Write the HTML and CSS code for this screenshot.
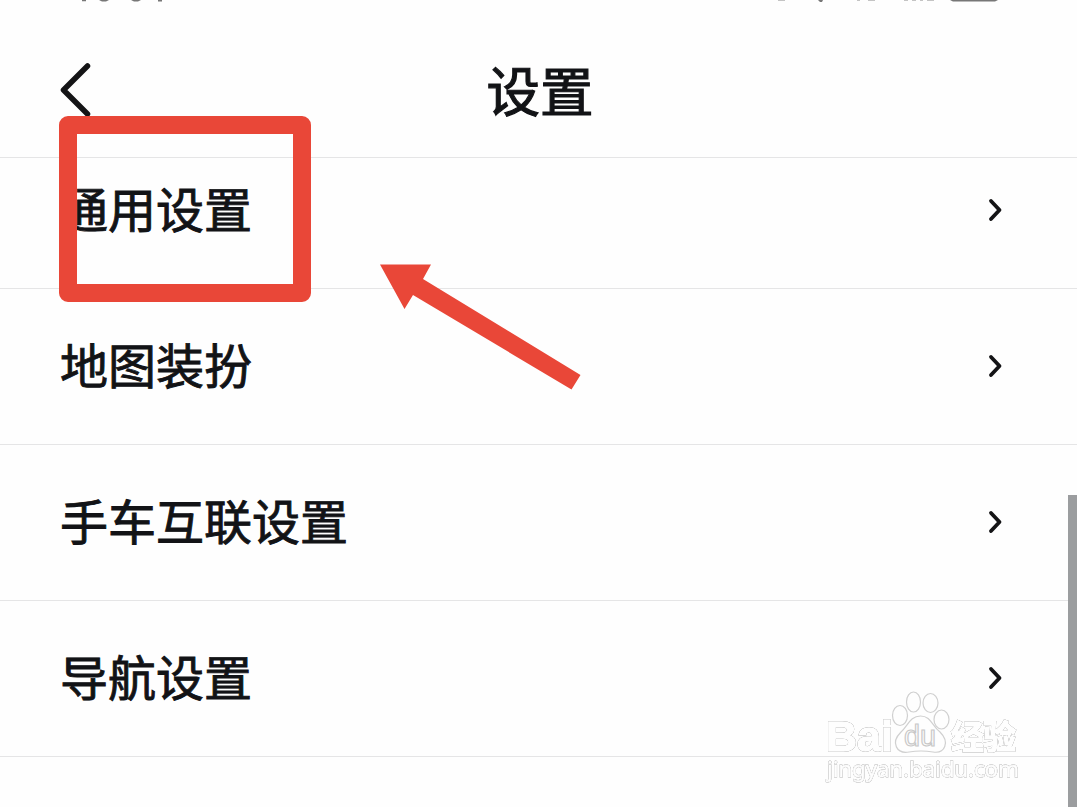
FILE: index.html
```html
<!DOCTYPE html>
<html lang="zh-CN">
<head>
<meta charset="utf-8">
<title>设置</title>
<link rel="stylesheet" href="styles.css">
</head>
<body>
<main class="screen">
  <header class="header">
    <svg class="back" viewBox="0 0 36 60" aria-label="返回"><path d="M29.500 9 5.500 33 29.500 57"/></svg>
    <h1 class="title">设置</h1>
    <span class="header-end"></span>
  </header>
  <ul class="list">
    <li class="row row-first"><span class="label">通用设置</span><svg class="chevron" viewBox="0 0 18 28"><path d="M5 4 13.500 13 5 22"/></svg></li>
    <li class="row"><span class="label">地图装扮</span><svg class="chevron" viewBox="0 0 18 28"><path d="M5 4 13.500 13 5 22"/></svg></li>
    <li class="row"><span class="label">手车互联设置</span><svg class="chevron" viewBox="0 0 18 28"><path d="M5 4 13.500 13 5 22"/></svg></li>
    <li class="row"><span class="label">导航设置</span><svg class="chevron" viewBox="0 0 18 28"><path d="M5 4 13.500 13 5 22"/></svg></li>
  </ul>
  <svg class="status" viewBox="0 0 1077 6">
    <path d="M82 0h4v1.200h-4zM99 0h10l-3 1.500h-4zM131 0h10l-3 1.500h-4zM158 0h4v1.500h-4z"/>
    <path d="M818 0h5l-1 2h-2zM950 0h48l-3 1.500h-42z"/>
    <path class="status-faint" d="M778 0h7v1h-7zM857 0h3v1h-3zM868 0h7v1h-7zM904 0h4v1h-4zM912 0h4v1h-4zM920 0h3v1h-3zM927 0h7v1h-7z"/>
  </svg>
  <svg class="watermark" viewBox="0 0 210 100">
    <text class="wm-logo" x="6" y="66" textLength="67" lengthAdjust="spacingAndGlyphs">Bai</text>
    <g class="wm-paw">
      <ellipse cx="80" cy="30.500" rx="7.500" ry="10"/>
      <ellipse cx="93.500" cy="17" rx="7" ry="10"/>
      <ellipse cx="110.500" cy="18" rx="7.500" ry="9.500"/>
      <ellipse cx="121.500" cy="34.500" rx="7.500" ry="9.500"/>
      <path d="M100.500 31C90 31 88 41 81 47C70 58 77 69 89 67Q101 65 113 67C125 69 130 57 120 47C112 41 111 31 100.500 31Z"/>
    </g>
    <text class="wm-du" x="84" y="61" textLength="32" lengthAdjust="spacingAndGlyphs">du</text>
    <text class="wm-cn" x="131" y="64" textLength="65">经验</text>
    <text class="wm-url" x="7" y="92" textLength="192">jingyan.baidu.com</text>
  </svg>
  <div class="scrollbar"></div>
  <div class="highlight"></div>
  <svg class="arrow" viewBox="0 0 210 130"><path d="M5 4.500H56L48 19 205.500 115 196.500 129.500 38 35 29.500 49Z"/></svg>
</main>
</body>
</html>
```
FILE: styles.css
```css
* { box-sizing: border-box; }
body { margin: 0; background: #fefefe; }
.screen {
  position: relative;
  width: 1077px;
  height: 807px;
  overflow: hidden;
  color: #121316;
  font-family: "Noto Sans CJK SC", sans-serif;
}
.header {
  display: flex;
  align-items: center;
  justify-content: space-between;
  height: 158px;
  padding: 20px 55px 0 58px;
  border-bottom: 1px solid #e5e5e6;
}
.back { width: 36px; height: 60px; margin-top: -3px; }
.back path, .chevron path { fill: none; stroke: #141416; stroke-linecap: round; stroke-linejoin: round; }
.back path { stroke-width: 5.5; }
.title {
  margin: 0;
  font-size: 53.5px;
  font-weight: 400;
  line-height: 70px;
  -webkit-text-stroke: 1.2px #121316;
}
.header-end { width: 36px; }
.list { margin: 0; padding: 0; list-style: none; }
.row {
  display: flex;
  align-items: center;
  justify-content: space-between;
  height: 156px;
  padding: 0 73px 0 60px;
  border-bottom: 1px solid #e5e5e6;
  font-size: 48px;
  line-height: 70px;
  -webkit-text-stroke: 0.9px #121316;
}
.row-first { height: 131px; padding-bottom: 25px; }
.label { padding-bottom: 7px; }
.chevron { width: 18px; height: 28px; }
.chevron path { stroke-width: 3.8; }
.status { position: absolute; left: 0; top: 0; width: 1077px; height: 6px; fill: #777; }
.status-faint { fill: #c4c4c4; }
.highlight {
  position: absolute;
  left: 59px;
  top: 116px;
  width: 252px;
  height: 186px;
  border: 18px solid #e94738;
  border-radius: 9px;
}
.arrow { position: absolute; left: 375px; top: 260px; width: 210px; height: 130px; fill: #e94738; }
.scrollbar { position: absolute; left: 1068px; top: 495px; width: 9px; height: 312px; background: #9b9d9f; }
.watermark { position: absolute; left: 820px; top: 685px; width: 210px; height: 100px; }
.watermark text { fill: #fefefe; stroke: #fefefe; stroke-width: 1.5; filter: drop-shadow(0 0 0.7px #666); }
.wm-paw { fill: #fefefe; stroke: #d0d0d0; stroke-width: 1.2; }
.wm-logo { font: bold 43px "Liberation Sans", sans-serif; }
.watermark .wm-du { font: 29px "Liberation Sans", sans-serif; stroke: #c8c8c8; stroke-width: 1.2; filter: none; }
.wm-cn { font: bold 33px "Noto Sans CJK SC", sans-serif; }
.watermark .wm-url { font: 22.500px "Noto Sans", sans-serif; stroke-width: 0.8; }
```
